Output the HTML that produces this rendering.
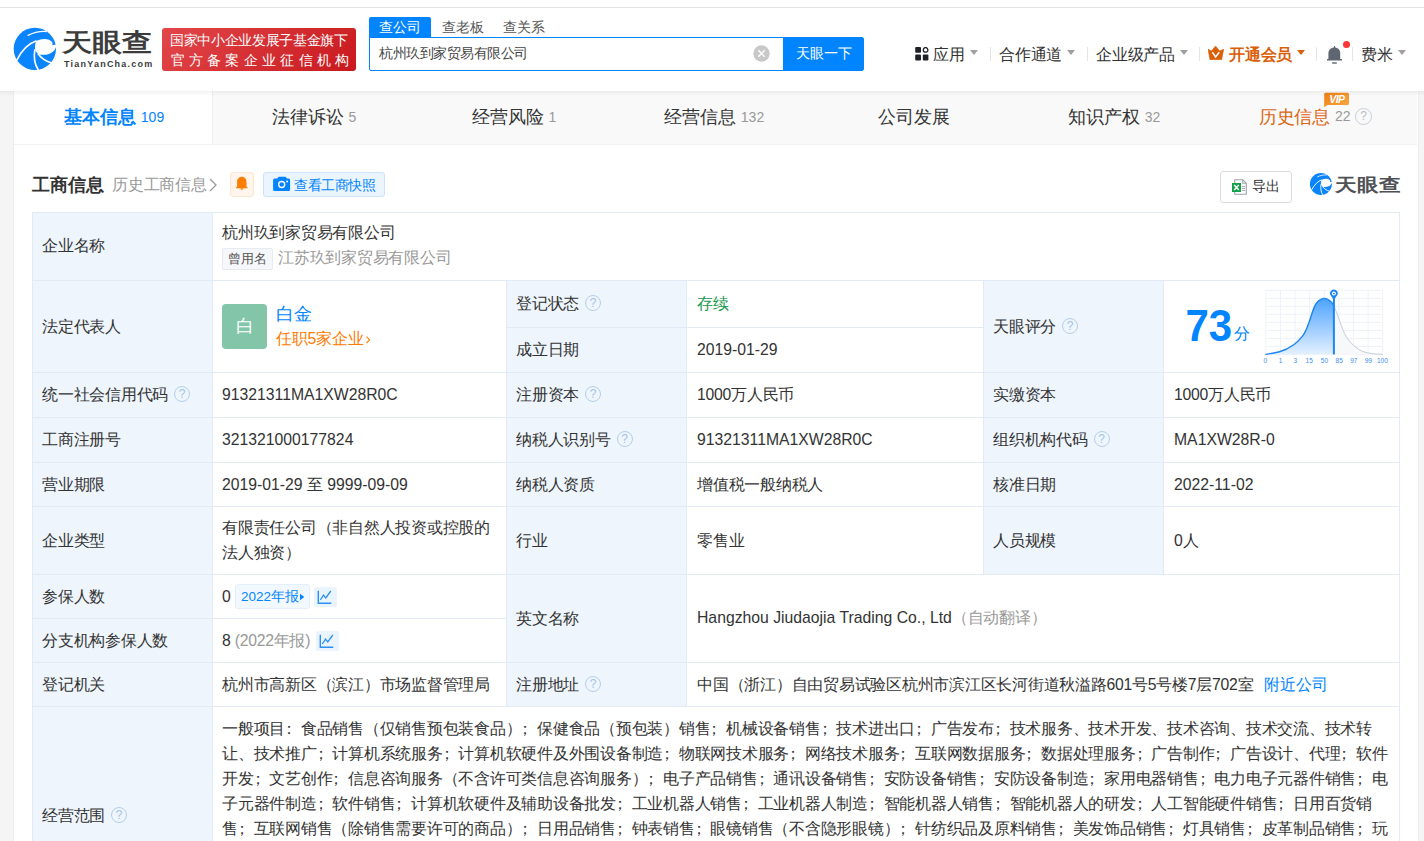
<!DOCTYPE html>
<html><head><meta charset="utf-8">
<style>
*{margin:0;padding:0;box-sizing:border-box}
html,body{width:1424px;height:841px;overflow:hidden;background:#f5f5f5;font-family:"Liberation Sans",sans-serif;color:#333}
.a{position:absolute;white-space:nowrap}
#top{position:absolute;left:0;top:0;width:1424px;height:8px;background:#fff;border-bottom:1px solid #e3e3e3}
#hdr{position:absolute;left:0;top:8px;width:1424px;height:83px;background:#fff;}
#card{position:absolute;left:14px;top:91px;width:1404px;height:760px;background:#fff;box-shadow:-1px 0 0 #ededed,1px 0 0 #ededed}
.tabs{position:absolute;left:14px;top:91px;width:1403px;height:54px;background:#f9f9f9;border-bottom:1px solid #f2f2f2}
.tab{position:absolute;top:91px;height:53px;white-space:nowrap;font-size:18px;line-height:53px;text-align:center;color:#333}
.tab i{font-style:normal;font-size:14px;color:#999;margin-left:5px;position:relative;top:-1.5px}
.cell{position:absolute;font-size:16px;color:#333}
.lab{background:#eef5fd}
.hl{position:absolute;height:1px;background:#e2ebf5}
.vl{position:absolute;width:1px;background:#e2ebf5}
.q{display:inline-block;width:16.4px;height:16.4px;border:1.2px solid #b3cfec;border-radius:50%;color:#a3c3e6;font-size:12px;line-height:14px;text-align:center;vertical-align:top;margin-top:2.5px;margin-left:6px;letter-spacing:0}
.t{position:absolute;white-space:nowrap;letter-spacing:-0.25px;font-size:15.75px;line-height:24px;height:24px;margin-top:-11px;color:#333}
.l{letter-spacing:0}
.nv{top:44.5px;font-size:15.75px;letter-spacing:-0.25px;line-height:20px;color:#333}
.tri{position:absolute;top:50px;width:0;height:0;border-left:4.5px solid transparent;border-right:4.5px solid transparent;border-top:5px solid #a0a0a0}
.sep{position:absolute;top:47px;width:1px;height:14px;background:#e2e6eb}
.p{position:relative;left:-4px}
</style></head><body>
<div id="top"></div>
<div id="hdr"></div>
<div id="card"></div>

<!-- header logo -->
<svg class="a" style="left:10px;top:24px" width="50" height="50" viewBox="0 0 841 841">
<circle cx="418" cy="418" r="356" fill="#0a84ff"/>
<path d="M440,288 C540,235 660,240 705,300 C725,330 715,350 700,358 L900,330 L900,420 L772,392 C745,480 640,545 478,508 C415,470 405,380 440,288 Z" fill="#fff"/>
<path d="M115,610 C190,450 310,330 445,282" stroke="#fff" stroke-width="28" fill="none"/>
<path d="M295,195 C400,140 520,118 620,126" stroke="#fff" stroke-width="24" fill="none"/>
<path d="M418,425 C395,560 415,680 478,775" stroke="#fff" stroke-width="28" fill="none"/>
<path d="M470,500 C540,590 610,632 695,652" stroke="#fff" stroke-width="28" fill="none"/>
</svg>
<div class="a" style="left:62px;top:22.5px;font-size:30px;line-height:40px;font-weight:bold;color:#3c3c3c;letter-spacing:0px;transform:scaleY(0.83);transform-origin:0 50%">天眼查</div>
<div class="a" style="left:64px;top:58px;font-size:9px;line-height:12px;font-weight:bold;color:#3c3c3c;letter-spacing:1.22px">TianYanCha.com</div>

<!-- red badge -->
<div class="a" style="left:162px;top:28px;width:194px;height:43px;border-radius:3px;background:linear-gradient(135deg,#e2474a,#c8191e)"></div>
<div class="a" style="left:170px;top:30.5px;font-size:14px;line-height:18px;color:#fff;letter-spacing:-0.35px;font-weight:500">国家中小企业发展子基金旗下</div>
<div class="a" style="left:170.5px;top:50.5px;font-size:14px;line-height:18px;color:#fff;letter-spacing:4.3px;font-weight:500">官方备案企业征信机构</div>

<!-- search -->
<div class="a" style="left:369px;top:17px;width:62px;height:21px;background:#0084ff;border-radius:2px 2px 0 0"></div>
<div class="a" style="left:379px;top:17px;font-size:14px;line-height:20px;color:#fff">查公司</div>
<div class="a" style="left:442px;top:17px;font-size:14px;line-height:20px;color:#555">查老板</div>
<div class="a" style="left:503px;top:17px;font-size:14px;line-height:20px;color:#555">查关系</div>
<div class="a" style="left:369px;top:37px;width:495px;height:34px;border:1px solid #0084ff;border-radius:0 3px 3px 2px;background:#fff"></div>
<div class="a" style="left:783px;top:37px;width:81px;height:34px;background:#0084ff;border-radius:0 3px 3px 0"></div>
<div class="a" style="left:379px;top:44px;font-size:13.5px;line-height:20px;color:#444;letter-spacing:-0.5px">杭州玖到家贸易有限公司</div>
<div class="a" style="left:796px;top:43px;font-size:14px;line-height:20px;color:#fff">天眼一下</div>
<svg class="a" style="left:753px;top:45px" width="17" height="17" viewBox="0 0 17 17"><circle cx="8.5" cy="8.5" r="8.2" fill="#c8c8c8"/><path d="M5.3 5.3L11.7 11.7M11.7 5.3L5.3 11.7" stroke="#fff" stroke-width="1.4"/></svg>

<!-- nav -->
<svg class="a" style="left:915px;top:47px" width="14" height="14" viewBox="0 0 14 14">
<rect x="0.2" y="0" width="5.8" height="5.8" rx="1" fill="#1e2126"/>
<rect x="0.2" y="7.6" width="5.8" height="5.9" rx="1" fill="#1e2126"/>
<rect x="7.8" y="7.6" width="5.6" height="5.9" rx="1" fill="#1e2126"/>
<circle cx="10.6" cy="2.9" r="2.3" fill="none" stroke="#1e2126" stroke-width="1.3"/>
</svg>
<div class="a nv" style="left:933px">应用</div>
<div class="a nv" style="left:999px">合作通道</div>
<div class="a nv" style="left:1096px">企业级产品</div>
<div class="a nv" style="left:1229px;color:#d9600a;font-weight:bold">开通会员</div>
<div class="a nv" style="left:1361px">费米</div>
<div class="tri" style="left:970px"></div>
<div class="tri" style="left:1067px"></div>
<div class="tri" style="left:1180px"></div>
<div class="tri" style="left:1297px;border-top-color:#d9600a"></div>
<div class="tri" style="left:1398px"></div>
<div class="sep" style="left:990px"></div>
<div class="sep" style="left:1087px"></div>
<div class="sep" style="left:1199px"></div>
<div class="sep" style="left:1316px"></div>
<div class="sep" style="left:1352px"></div>
<svg class="a" style="left:1208px;top:46px" width="16" height="14" viewBox="0 0 16 14">
<path d="M0,3.2 L3.5,4.9 L7.6,0 L11.6,4.9 L15.7,3.2 L13.6,13.8 L2,13.8 Z" fill="#d9600a" stroke="#d9600a" stroke-width="0.6" stroke-linejoin="round"/>
<path d="M4.3,6.2 L7.6,11 L11.3,6.2" fill="none" stroke="#fff" stroke-width="1.5"/>
</svg>
<svg class="a" style="left:1326px;top:45px" width="17" height="20" viewBox="0 0 17 20">
<rect x="7.9" y="1" width="1.2" height="3" fill="#5f6672"/>
<path d="M2.4,14 L2.4,8.5 C2.4,4.8 5,2.6 8.5,2.6 C12,2.6 14.2,4.8 14.2,8.5 L14.2,14 Z" fill="#5f6672"/>
<rect x="1" y="14" width="15" height="1.6" rx="0.5" fill="#5f6672"/>
<rect x="6.1" y="17.3" width="4.7" height="1.4" fill="#5f6672"/>
</svg>
<div class="a" style="left:1343px;top:41px;width:7px;height:7px;border-radius:50%;background:#ff3535"></div>

<!-- tabs -->
<div class="tabs"></div>
<div class="a" style="left:14px;top:91px;width:199px;height:53px;background:#fff;border-right:1px solid #efefef"></div>


<!-- tab labels -->
<div class="tab" style="left:14px;width:200px;color:#0084ff;font-weight:bold">基本信息<i style="color:#0084ff;font-weight:normal">109</i></div>
<div class="tab" style="left:214px;width:200px">法律诉讼<i>5</i></div>
<div class="tab" style="left:414px;width:200px">经营风险<i>1</i></div>
<div class="tab" style="left:614px;width:200px">经营信息<i>132</i></div>
<div class="tab" style="left:814px;width:200px">公司发展</div>
<div class="tab" style="left:1014px;width:200px">知识产权<i>32</i></div>
<div class="a" style="left:1259px;top:91px;font-size:18px;line-height:53px;color:#dd6512;letter-spacing:-0.5px">历史信息</div>
<div class="a" style="left:1335px;top:89.5px;font-size:14px;line-height:53px;color:#999">22</div>
<div class="a" style="left:1355px;top:108px;width:17px;height:17px;border:1.3px solid #c8cfd6;border-radius:50%;color:#b5bcc4;font-size:12px;line-height:15px;text-align:center">?</div>
<svg class="a" style="left:1323px;top:92px" width="27" height="16" viewBox="0 0 27 16">
<defs><linearGradient id="vg" x1="0" y1="0" x2="1" y2="1"><stop offset="0" stop-color="#ef7d12"/><stop offset="1" stop-color="#f9a845"/></linearGradient></defs>
<path d="M2.5,0.7 L24.5,0.7 Q26,0.7 26,2.2 L26,11.4 Q26,12.9 24.5,12.9 L4.5,12.9 L1.2,15.2 L1.2,2.2 Q1.2,0.7 2.5,0.7 Z" fill="url(#vg)"/>
<text x="13.8" y="10.6" text-anchor="middle" font-family="Liberation Sans" font-weight="bold" font-style="italic" font-size="10.5" fill="#fff" letter-spacing="-0.6">VIP</text>
</svg>

<div class="a" style="left:0;top:91px;width:1424px;height:5px;background:linear-gradient(rgba(0,0,0,0.05),rgba(0,0,0,0))"></div>
<!-- section header -->
<div class="a" style="left:32px;top:172.5px;font-size:18px;line-height:24px;font-weight:bold;color:#333">工商信息</div>
<div class="a" style="left:112px;top:173px;font-size:15.75px;letter-spacing:-0.25px;line-height:24px;color:#999">历史工商信息</div>
<svg class="a" style="left:207px;top:177px" width="12" height="16" viewBox="0 0 12 16"><path d="M3,2 L9,8 L3,14" fill="none" stroke="#999" stroke-width="1.3"/></svg>
<div class="a" style="left:230px;top:172px;width:24px;height:25px;background:#fff5ec;border:1px solid #fde5d3;border-radius:3px"></div>
<svg class="a" style="left:235px;top:176px" width="14" height="15" viewBox="0 0 14 15">
<path d="M6.8,0.8 C4,0.8 2.1,3 2.1,6 L2.1,10.8 L0.9,11.6 L0.9,12.2 L12.7,12.2 L12.7,11.6 L11.5,10.8 L11.5,6 C11.5,3 9.6,0.8 6.8,0.8 Z" fill="#ff7d00"/>
<path d="M5.3,12.2 A1.5,1.6 0 0 0 8.3,12.2 Z" fill="#ff7d00"/>
</svg>
<div class="a" style="left:263px;top:172px;width:122px;height:25px;background:#ebf5ff;border:1px solid #cbe3fd;border-radius:3px"></div>
<svg class="a" style="left:273px;top:176px" width="18" height="16" viewBox="0 0 18 16">
<path d="M2.5,2.5 L4.2,2.5 L5.6,0.8 L12.6,0.8 L14,2.5 L15.6,2.5 Q17.1,2.5 17.1,4 L17.1,13.4 Q17.1,14.9 15.6,14.9 L1.6,14.9 Q0.1,14.9 0.1,13.4 L0.1,4 Q0.1,2.5 1.6,2.5 Z" fill="#0084ff"/>
<circle cx="8.7" cy="8.5" r="3" fill="none" stroke="#fff" stroke-width="1.4"/>
<circle cx="14.1" cy="5.4" r="1" fill="#fff"/>
</svg>
<div class="a" style="left:294px;top:173.5px;font-size:13.5px;letter-spacing:-0.5px;line-height:24px;color:#0084ff">查看工商快照</div>
<div class="a" style="left:1220px;top:171px;width:72px;height:32px;background:#fff;border:1px solid #dcdcdc;border-radius:3px"></div>
<svg class="a" style="left:1231px;top:178px" width="17" height="18" viewBox="0 0 17 18">
<path d="M3.7,1.7 L11.8,1.7 L15.3,5.2 L15.3,16.3 L3.7,16.3 Z" fill="#fff" stroke="#9da3ab" stroke-width="1.1"/>
<path d="M11.8,1.7 L11.8,5.2 L15.3,5.2" fill="none" stroke="#9da3ab" stroke-width="1.1"/>
<rect x="1" y="5" width="9" height="9" fill="#13a04a"/>
<path d="M3.2,7 L7.8,12 M7.8,7 L3.2,12" stroke="#fff" stroke-width="1.5"/>
<path d="M11,8.5 H14 M11,10.5 H14 M11,12.5 H14" stroke="#9da3ab" stroke-width="0.9"/>
</svg>
<div class="a" style="left:1252px;top:177px;font-size:13.5px;letter-spacing:-0.5px;line-height:20px;color:#333">导出</div>
<svg class="a" style="left:1307.5px;top:170.5px" width="26" height="26" viewBox="0 0 841 841">
<circle cx="418" cy="418" r="356" fill="#0a84ff"/>
<path d="M440,288 C540,235 660,240 705,300 C725,330 715,350 700,358 L900,330 L900,420 L772,392 C745,480 640,545 478,508 C415,470 405,380 440,288 Z" fill="#fff"/>
<path d="M122,605 C200,450 320,330 445,285" stroke="#fff" stroke-width="30" fill="none"/>
<path d="M300,192 C400,140 520,120 615,128" stroke="#fff" stroke-width="26" fill="none"/>
<path d="M418,430 C400,560 420,680 475,770" stroke="#fff" stroke-width="30" fill="none"/>
<path d="M472,505 C540,590 610,630 690,650" stroke="#fff" stroke-width="30" fill="none"/>
</svg>
<div class="a" style="left:1335px;top:170px;font-size:22px;line-height:30px;font-weight:bold;color:#4f5156;transform:scaleY(0.83);transform-origin:0 50%">天眼查</div>

<!-- table backgrounds -->
<div class="a lab" style="left:32px;top:212px;width:180px;height:640px"></div>
<div class="a lab" style="left:506px;top:280px;width:180px;height:426px"></div>
<div class="a lab" style="left:983px;top:280px;width:180px;height:294px"></div>
<!-- horizontal lines -->
<div class="hl" style="left:32px;top:212px;width:1368px"></div>
<div class="hl" style="left:32px;top:280px;width:1368px"></div>
<div class="hl" style="left:506px;top:327px;width:477px"></div>
<div class="hl" style="left:32px;top:372px;width:1368px"></div>
<div class="hl" style="left:32px;top:417px;width:1368px"></div>
<div class="hl" style="left:32px;top:462px;width:1368px"></div>
<div class="hl" style="left:32px;top:506px;width:1368px"></div>
<div class="hl" style="left:32px;top:574px;width:1368px"></div>
<div class="hl" style="left:32px;top:618px;width:474px"></div>
<div class="hl" style="left:32px;top:662px;width:1368px"></div>
<div class="hl" style="left:32px;top:706px;width:1368px"></div>
<!-- vertical lines -->
<div class="vl" style="left:32px;top:212px;height:640px"></div>
<div class="vl" style="left:212px;top:212px;height:640px"></div>
<div class="vl" style="left:506px;top:280px;height:426px"></div>
<div class="vl" style="left:686px;top:280px;height:426px"></div>
<div class="vl" style="left:983px;top:280px;height:294px"></div>
<div class="vl" style="left:1163px;top:280px;height:294px"></div>
<div class="vl" style="left:1399px;top:212px;height:640px"></div>

<!-- labels col1 -->
<div class="t" style="left:42px;top:245px">企业名称</div>
<div class="t" style="left:42px;top:326px">法定代表人</div>
<div class="t" style="left:42px;top:394px">统一社会信用代码<span class="q">?</span></div>
<div class="t" style="left:42px;top:439px">工商注册号</div>
<div class="t" style="left:42px;top:484px">营业期限</div>
<div class="t" style="left:42px;top:540px">企业类型</div>
<div class="t" style="left:42px;top:596px">参保人数</div>
<div class="t" style="left:42px;top:640px">分支机构参保人数</div>
<div class="t" style="left:42px;top:684px">登记机关</div>
<div class="t" style="left:42px;top:815px">经营范围<span class="q">?</span></div>
<!-- labels col3 -->
<div class="t" style="left:516px;top:303px">登记状态<span class="q">?</span></div>
<div class="t" style="left:516px;top:349px">成立日期</div>
<div class="t" style="left:516px;top:394px">注册资本<span class="q">?</span></div>
<div class="t" style="left:516px;top:439px">纳税人识别号<span class="q">?</span></div>
<div class="t" style="left:516px;top:484px">纳税人资质</div>
<div class="t" style="left:516px;top:540px">行业</div>
<div class="t" style="left:516px;top:618px">英文名称</div>
<div class="t" style="left:516px;top:684px">注册地址<span class="q">?</span></div>
<!-- labels col5 -->
<div class="t" style="left:993px;top:326px">天眼评分<span class="q">?</span></div>
<div class="t" style="left:993px;top:394px">实缴资本</div>
<div class="t" style="left:993px;top:439px">组织机构代码<span class="q">?</span></div>
<div class="t" style="left:993px;top:484px">核准日期</div>
<div class="t" style="left:993px;top:540px">人员规模</div>

<!-- values col2 -->
<div class="t" style="left:222px;top:232px">杭州玖到家贸易有限公司</div>
<div class="a" style="left:222px;top:248px;width:51px;height:22px;background:#f5f7fa;border:1px solid #e6ebf1;border-radius:2px"></div>
<div class="t" style="left:228px;top:258px;font-size:13px;color:#555">曾用名</div>
<div class="t" style="left:278px;top:257px;color:#999">江苏玖到家贸易有限公司</div>
<div class="a" style="left:222px;top:304px;width:45px;height:45px;background:#83c5a9;border-radius:4px;color:#fff;font-size:18px;line-height:45px;text-align:center;font-weight:300">白</div>
<div class="t" style="left:276px;top:313px;font-size:18px;color:#0084ff">白金</div>
<div class="t" style="left:276px;top:338px;color:#ff7a00">任职5家企业</div><svg class="a" style="left:364px;top:333px" width="8" height="12" viewBox="0 0 8 12"><path d="M2.5,3.5 L5.5,6.8 L2.5,10" fill="none" stroke="#ff7a00" stroke-width="1.1"/></svg>
<div class="t l" style="left:222px;top:394px">91321311MA1XW28R0C</div>
<div class="t l" style="left:222px;top:439px">321321000177824</div>
<div class="t l" style="left:222px;top:484px">2019-01-29 至 9999-09-09</div>
<div class="t" style="left:222px;top:527px">有限责任公司（非自然人投资或控股的</div>
<div class="t" style="left:222px;top:552px">法人独资）</div>
<div class="t" style="left:222px;top:596px">0</div>
<div class="a" style="left:235px;top:584px;width:75px;height:25px;background:#f2f8ff;border:1px solid #e3effc;border-radius:3px"></div>
<div class="t" style="left:241px;top:596px;font-size:13.5px;letter-spacing:0;color:#0084ff"><span class="l">2022</span><span style="letter-spacing:-0.5px">年报</span></div><svg class="a" style="left:298px;top:592px" width="8" height="10" viewBox="0 0 8 10"><path d="M2,1.8 L6.3,5 L2,8.2 Z" fill="#0084ff"/></svg>
<div class="a" style="left:314px;top:587px;width:23px;height:20px;background:#eaf4ff;border-radius:2px"></div><svg class="a" style="left:314px;top:587px" width="23" height="20" viewBox="0 0 23 20"><path d="M4.3,3.8 V16.3 H17.3" fill="none" stroke="#2b8ff5" stroke-width="1.4"/><path d="M6.3,13 L9.5,8.2 L11.8,11 L16.8,4" fill="none" stroke="#2b8ff5" stroke-width="1.3"/></svg>
<div class="t" style="left:222px;top:640px">8 <span style="color:#999">(2022年报)</span></div>
<div class="a" style="left:316px;top:631px;width:23px;height:20px;background:#eaf4ff;border-radius:2px"></div><svg class="a" style="left:316px;top:631px" width="23" height="20" viewBox="0 0 23 20"><path d="M4.3,3.8 V16.3 H17.3" fill="none" stroke="#2b8ff5" stroke-width="1.4"/><path d="M6.3,13 L9.5,8.2 L11.8,11 L16.8,4" fill="none" stroke="#2b8ff5" stroke-width="1.3"/></svg>
<div class="t" style="left:222px;top:684px">杭州市高新区（滨江）市场监督管理局</div>
<!-- values col4 -->
<div class="t" style="left:697px;top:303px;color:#1a9a4d">存续</div>
<div class="t l" style="left:697px;top:349px">2019-01-29</div>
<div class="t" style="left:697px;top:394px">1000万人民币</div>
<div class="t l" style="left:697px;top:439px">91321311MA1XW28R0C</div>
<div class="t" style="left:697px;top:484px">增值税一般纳税人</div>
<div class="t" style="left:697px;top:540px">零售业</div>
<div class="t" style="left:697px;top:616.5px"><span class="l">Hangzhou Jiudaojia Trading Co., Ltd</span><span style="color:#999">（自动翻译）</span></div>
<div class="t" style="left:697px;top:684px">中国（浙江）自由贸易试验区杭州市滨江区长河街道秋溢路601号5号楼7层702室<span style="color:#0084ff;margin-left:11px;letter-spacing:0">附近公司</span></div>
<!-- values col6 -->
<div class="t" style="left:1174px;top:394px">1000万人民币</div>
<div class="t l" style="left:1174px;top:439px">MA1XW28R-0</div>
<div class="t l" style="left:1174px;top:484px">2022-11-02</div>
<div class="t" style="left:1174px;top:540px">0人</div>
<div class="a" style="left:1185.5px;top:301.5px;font-size:42px;line-height:50px;font-weight:bold;color:#0084ff;transform:scaleY(1.065);transform-origin:0 80%">73</div>
<div class="t" style="left:1234px;top:333px;color:#0084ff">分</div>

<svg class="a" style="left:1260px;top:284px" width="130" height="82" viewBox="1260 284 130 82">
<defs><linearGradient id="cg" x1="0" y1="0" x2="0" y2="1"><stop offset="0" stop-color="#4da3ff"/><stop offset="1" stop-color="#e3f0ff"/></linearGradient></defs>
<g stroke="#edf2f9" stroke-width="1" fill="none"><line x1="1265.9" y1="290.3" x2="1265.9" y2="354.4"/><line x1="1280.5" y1="290.3" x2="1280.5" y2="354.4"/><line x1="1295.1" y1="290.3" x2="1295.1" y2="354.4"/><line x1="1309.7" y1="290.3" x2="1309.7" y2="354.4"/><line x1="1324.3" y1="290.3" x2="1324.3" y2="354.4"/><line x1="1338.9" y1="290.3" x2="1338.9" y2="354.4"/><line x1="1353.5" y1="290.3" x2="1353.5" y2="354.4"/><line x1="1368.1" y1="290.3" x2="1368.1" y2="354.4"/><line x1="1382.7" y1="290.3" x2="1382.7" y2="354.4"/><line x1="1265.9" y1="290.3" x2="1382.7" y2="290.3"/><line x1="1265.9" y1="298.3" x2="1382.7" y2="298.3"/><line x1="1265.9" y1="306.3" x2="1382.7" y2="306.3"/><line x1="1265.9" y1="314.3" x2="1382.7" y2="314.3"/><line x1="1265.9" y1="322.3" x2="1382.7" y2="322.3"/><line x1="1265.9" y1="330.4" x2="1382.7" y2="330.4"/><line x1="1265.9" y1="338.4" x2="1382.7" y2="338.4"/><line x1="1265.9" y1="346.4" x2="1382.7" y2="346.4"/><line x1="1265.9" y1="354.4" x2="1382.7" y2="354.4"/></g>
<path d="M1333.9,306 C1336,311 1337,313 1338,316.2 C1339.5,320.5 1341,325.5 1342.9,329.8 C1345,335 1347.5,339 1350.7,342.5 C1354,346 1358,349.5 1362.4,351.3 C1368,353.5 1375,354.2 1382.7,354.4 L1333.9,354.4 Z" fill="#f7f8fa"/>
<path d="M1333.9,306 C1336,311 1337,313 1338,316.2 C1339.5,320.5 1341,325.5 1342.9,329.8 C1345,335 1347.5,339 1350.7,342.5 C1354,346 1358,349.5 1362.4,351.3 C1368,353.5 1375,354.2 1382.7,354.4" fill="none" stroke="#c4cdd8" stroke-width="1"/>
<path d="M1265.4,354.4 C1270,353.8 1275,353 1279.5,351.8 C1285,350.3 1290,347.5 1294.1,344.5 C1297.5,342 1300.5,339 1302.9,335.7 C1305.5,332 1307.2,327.5 1308.8,323 C1310.8,317.5 1312.5,311 1314.6,306.4 C1316.3,302.8 1318.3,300.5 1320.5,299.6 C1321.8,298.9 1323,298.4 1324.4,298.4 C1326.8,298.4 1328.6,299.6 1330.2,301.1 C1331.6,302.4 1332.9,304 1333.9,306 L1333.9,354.4 Z" fill="url(#cg)"/>
<path d="M1265.4,354.4 C1270,353.8 1275,353 1279.5,351.8 C1285,350.3 1290,347.5 1294.1,344.5 C1297.5,342 1300.5,339 1302.9,335.7 C1305.5,332 1307.2,327.5 1308.8,323 C1310.8,317.5 1312.5,311 1314.6,306.4 C1316.3,302.8 1318.3,300.5 1320.5,299.6 C1321.8,298.9 1323,298.4 1324.4,298.4 C1326.8,298.4 1328.6,299.6 1330.2,301.1 C1331.6,302.4 1332.9,304 1333.9,306" fill="none" stroke="#1a86f5" stroke-width="1.4"/>
<rect x="1332.9" y="297" width="2" height="57.4" fill="#1a86f5"/>
<path d="M1333.9,300 L1330.8,295.6 A3.8,3.8 0 1 1 1337,295.6 Z" fill="#1a86f5"/>
<circle cx="1333.9" cy="293.6" r="2" fill="#fff"/>
<circle cx="1333.9" cy="293.6" r="0.9" fill="#1a86f5"/>
<g font-family="Liberation Sans" font-size="6.5" fill="#3d8ef0"><text x="1265.4" y="362.6" text-anchor="middle">0</text><text x="1280.5" y="362.6" text-anchor="middle">1</text><text x="1295.3" y="362.6" text-anchor="middle">3</text><text x="1309.2" y="362.6" text-anchor="middle">15</text><text x="1324.4" y="362.6" text-anchor="middle">50</text><text x="1339.2" y="362.6" text-anchor="middle">85</text><text x="1353.8" y="362.6" text-anchor="middle">97</text><text x="1368.3" y="362.6" text-anchor="middle">99</text><text x="1382.4" y="362.6" text-anchor="middle">100</text></g>
</svg>
<!-- business scope -->
<div class="a" style="left:222px;top:717.2px;letter-spacing:-0.25px;font-size:15.75px;line-height:24.85px;color:#333">一般项目<span class="p">：</span>食品销售（仅销售预包装食品）<span class="p">；</span>保健食品（预包装）销售<span class="p">；</span>机械设备销售<span class="p">；</span>技术进出口<span class="p">；</span>广告发布<span class="p">；</span>技术服务、技术开发、技术咨询、技术交流、技术转<br>让、技术推广<span class="p">；</span>计算机系统服务<span class="p">；</span>计算机软硬件及外围设备制造<span class="p">；</span>物联网技术服务<span class="p">；</span>网络技术服务<span class="p">；</span>互联网数据服务<span class="p">；</span>数据处理服务<span class="p">；</span>广告制作<span class="p">；</span>广告设计、代理<span class="p">；</span>软件<br>开发<span class="p">；</span>文艺创作<span class="p">；</span>信息咨询服务（不含许可类信息咨询服务）<span class="p">；</span>电子产品销售<span class="p">；</span>通讯设备销售<span class="p">；</span>安防设备销售<span class="p">；</span>安防设备制造<span class="p">；</span>家用电器销售<span class="p">；</span>电力电子元器件销售<span class="p">；</span>电<br>子元器件制造<span class="p">；</span>软件销售<span class="p">；</span>计算机软硬件及辅助设备批发<span class="p">；</span>工业机器人销售<span class="p">；</span>工业机器人制造<span class="p">；</span>智能机器人销售<span class="p">；</span>智能机器人的研发<span class="p">；</span>人工智能硬件销售<span class="p">；</span>日用百货销<br>售<span class="p">；</span>互联网销售（除销售需要许可的商品）<span class="p">；</span>日用品销售<span class="p">；</span>钟表销售<span class="p">；</span>眼镜销售（不含隐形眼镜）<span class="p">；</span>针纺织品及原料销售<span class="p">；</span>美发饰品销售<span class="p">；</span>灯具销售<span class="p">；</span>皮革制品销售<span class="p">；</span>玩</div>


</body></html>
